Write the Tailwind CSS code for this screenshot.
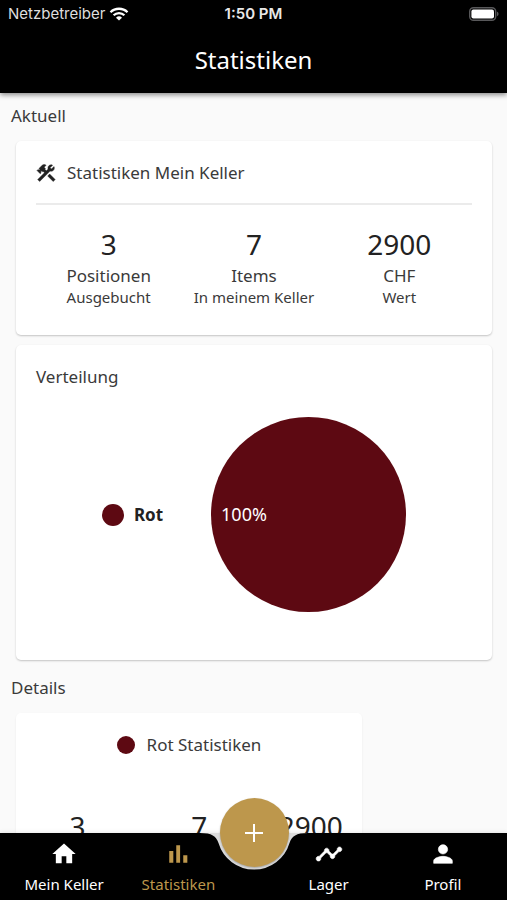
<!DOCTYPE html>
<html lang="de">
<head>
    <meta charset="UTF-8">
    <meta name="viewport" content="width=device-width, initial-scale=1.0">
    <title>Statistiken</title>
    <script src="https://cdn.jsdelivr.net/npm/@tailwindcss/browser@4"></script>
</head>
<body class="h-screen flex flex-col bg-[#fafafa] text-[#3a3a3a] font-['Noto_Sans',sans-serif]">

    <!-- Header -->
    <header class="relative z-10 bg-black text-white shadow-[0_2px_5px_rgba(0,0,0,0.45)]">
        <div class="grid grid-cols-3 items-center h-7 px-2 text-[15px] font-['Inter',sans-serif]">
            <div class="flex items-center gap-1 text-[#dedede]">
                <span>Netzbetreiber</span>
                <svg class="w-5 h-[14px]" viewBox="0 0 20 14" fill="none" stroke="#fff" stroke-width="2.3">
                    <path d="M1.5 5.2a12.2 12.2 0 0 1 17 0M4.6 8.3a7.7 7.7 0 0 1 10.8 0"/>
                    <path d="M10 13.6 7 10.7a4.3 4.3 0 0 1 6 0z" fill="#fff" stroke="none"/>
                </svg>
            </div>
            <span class="text-center font-semibold text-[#e8e8e8]">1:50 PM</span>
            <svg class="justify-self-end w-[30px] h-[14px]" viewBox="0 0 30 14">
                <rect x="0.7" y="0.7" width="26" height="12.6" rx="3.8" fill="none" stroke="#58585a" stroke-width="1.4"/>
                <rect x="2.4" y="2.4" width="22.6" height="9.2" rx="2" fill="#fff"/>
                <path d="M28 4.8c2 .6 2 3.8 0 4.4z" fill="#58585a"/>
            </svg>
        </div>
        <h1 class="pt-4 pb-[17px] text-center text-[24px] leading-8">Statistiken</h1>
    </header>

    <!-- Content -->
    <main class="flex-1 min-h-0 overflow-y-auto [scrollbar-width:none]">
        <h2 class="px-[11px] pt-[11px] pb-[13px] text-[17px] leading-6">Aktuell</h2>

        <section class="ml-4 mr-[15px] px-5 pt-5 pb-[29px] bg-white rounded-[5px] shadow-[0_1px_2px_rgba(0,0,0,0.22)]">
            <div class="flex items-center gap-[9px] pb-[18px] border-b-2 border-[#ebebeb]">
                <svg class="w-[22px] h-[22px]" viewBox="1 0 24 24" fill="#222" stroke="#222" stroke-width="0.5">
                    <path d="M13.78 15.3L19.78 21.3L21.89 19.14L15.89 13.14L13.78 15.3M17.5 10.1C17.11 10.1 16.69 10.05 16.36 9.91L4.97 21.25L2.86 19.14L10.27 11.74L8.5 9.96L7.78 10.66L6.33 9.25V12.11L5.63 12.81L2.11 9.25L2.81 8.55H5.62L4.22 7.14L7.78 3.58C8.95 2.41 10.83 2.41 12 3.58L9.89 5.74L11.3 7.14L10.59 7.85L12.38 9.63L14.2 7.75C14.06 7.42 14 7 14 6.63C14 4.66 15.56 3.11 17.5 3.11C18.09 3.11 18.61 3.25 19.08 3.53L16.41 6.2L17.91 7.7L20.58 5.03C20.86 5.5 21 6 21 6.63C21 8.55 19.45 10.1 17.5 10.1Z"/>
                </svg>
                <h3 class="text-[17px] leading-6">Statistiken Mein Keller</h3>
            </div>
            <div class="grid grid-cols-3 pt-[19px] text-center">
                <div>
                    <p class="text-[28px] leading-10 text-[#222]">3</p>
                    <p class="text-[17px] leading-6">Positionen</p>
                    <p class="text-[15px] leading-[18px]">Ausgebucht</p>
                </div>
                <div>
                    <p class="text-[28px] leading-10 text-[#222]">7</p>
                    <p class="text-[17px] leading-6">Items</p>
                    <p class="text-[15px] leading-[18px]">In meinem Keller</p>
                </div>
                <div>
                    <p class="text-[28px] leading-10 text-[#222]">2900</p>
                    <p class="text-[17px] leading-6">CHF</p>
                    <p class="text-[15px] leading-[18px]">Wert</p>
                </div>
            </div>
        </section>

        <section class="ml-4 mr-[15px] mt-[10px] px-5 pt-5 pb-12 bg-white rounded-[5px] shadow-[0_1px_2px_rgba(0,0,0,0.22)]">
            <h3 class="text-[17px] leading-6">Verteilung</h3>
            <div class="flex items-center justify-center gap-12 pt-7">
                <div class="flex items-center gap-[10px]">
                    <span class="size-[22px] rounded-full bg-[#5d0912]"></span>
                    <span class="text-[17px] font-bold text-[#222]">Rot</span>
                </div>
                <div class="size-[195px] rounded-full bg-[#5d0912] flex items-center pl-[10px] text-[18px] text-white">100%</div>
            </div>
        </section>

        <h2 class="px-[11px] pt-4 pb-[13px] text-[17px] leading-6">Details</h2>

        <section class="ml-4 w-[346px] pt-5 pb-12 bg-white rounded-[5px] shadow-[0_1px_2px_rgba(0,0,0,0.08)]">
            <div class="flex items-center justify-center gap-3">
                <span class="size-[18px] rounded-full bg-[#5d0912]"></span>
                <h3 class="text-[17px] leading-6">Rot Statistiken</h3>
            </div>
            <div class="flex justify-evenly pt-[49px] text-center">
                <div>
                    <p class="text-[28px] leading-10 text-[#222]">3</p>
                    <p class="text-[17px] leading-6">Positionen</p>
                    <p class="text-[15px] leading-[18px]">Ausgebucht</p>
                </div>
                <div>
                    <p class="text-[28px] leading-10 text-[#222]">7</p>
                    <p class="text-[17px] leading-6">Items</p>
                    <p class="text-[15px] leading-[18px]">In meinem Keller</p>
                </div>
                <div>
                    <p class="text-[28px] leading-10 text-[#222]">2900</p>
                    <p class="text-[17px] leading-6">CHF</p>
                    <p class="text-[15px] leading-[18px]">Wert</p>
                </div>
            </div>
        </section>
    </main>

    <!-- Bottom navigation -->
    <nav class="relative bg-black text-white text-[15px] leading-5 shadow-[0_0_5px_rgba(0,0,0,0.12)]">
        <div class="flex px-[7px] pt-[7px] pb-[6px]">
            <a href="#" class="flex-1 flex flex-col items-center gap-[6px]">
                <svg class="w-7 h-7" viewBox="0 0 24 24" fill="currentColor"><path d="M10 20v-6h4v6h5v-8h3L12 3 2 12h3v8z"/></svg>
                Mein Keller
            </a>
            <a href="#" class="flex-1 flex flex-col items-center gap-[6px] text-[#bd974c]">
                <svg class="w-7 h-7" viewBox="0 0 24 24" fill="currentColor"><path d="M4.5 9.5h3.500v10H4.500zM10.500 4.500h3.300v15h-3.300zM16.500 13h3.500v6.500h-3.500z"/></svg>
                Statistiken
            </a>
            <span class="w-9"></span>
            <a href="#" class="flex-1 flex flex-col items-center gap-[6px]">
                <svg class="w-7 h-7" viewBox="0 0 24 24" fill="currentColor" stroke="currentColor" stroke-width="0.5"><path d="M23 8c0 1.100-.9 2-2 2-.18 0-.35-.02-.51-.07l-3.560 3.550c.05.16.07.34.07.52 0 1.100-.9 2-2 2s-2-.9-2-2c0-.18.02-.36.07-.52l-2.550-2.550c-.16.05-.34.07-.52.07s-.36-.02-.52-.07l-4.550 4.560c.05.16.07.33.07.51 0 1.100-.9 2-2 2s-2-.9-2-2 .9-2 2-2c.18 0 .35.02.51.07l4.560-4.550C8.020 9.360 8 9.180 8 9c0-1.100.9-2 2-2s2 .9 2 2c0 .18-.02.36-.07.52l2.550 2.550c.16-.05.34-.07.52-.07s.36.02.52.07l3.550-3.560C19.020 8.350 19 8.180 19 8c0-1.100.9-2 2-2s2 .9 2 2z"/></svg>
                Lager
            </a>
            <a href="#" class="flex-1 flex flex-col items-center gap-[6px]">
                <svg class="w-7 h-7" viewBox="0 0 24 24" fill="currentColor" stroke="currentColor" stroke-width="0.5"><path d="M12 12c2.210 0 4-1.790 4-4s-1.790-4-4-4-4 1.790-4 4 1.790 4 4 4zm0 2c-2.670 0-8 1.340-8 4v2h16v-2c0-2.660-5.330-4-8-4z"/></svg>
                Profil
            </a>
        </div>
        <!-- Notch with the add button -->
        <div class="absolute left-1/2 -top-9 -translate-x-1/2">
            <svg class="w-[108px] h-[74px]" viewBox="0 0 108 74">
                <path d="M0 36C12 36 16 39 18.500 46A37 37 0 0 0 89.500 46C92 39 96 36 108 36z" fill="#dcdcdc"/>
            </svg>
            <button aria-label="Hinzufügen" class="absolute top-[1px] left-5 size-[69px] rounded-full bg-[#bd974c] flex items-center justify-center shadow-[0_1px_2px_rgba(0,0,0,0.25)]">
                <svg class="w-[18px] h-[18px]" viewBox="0 0 18 18" stroke="#fff" stroke-width="2"><path d="M9 0v18M0 9h18"/></svg>
            </button>
        </div>
    </nav>

</body>
</html>
